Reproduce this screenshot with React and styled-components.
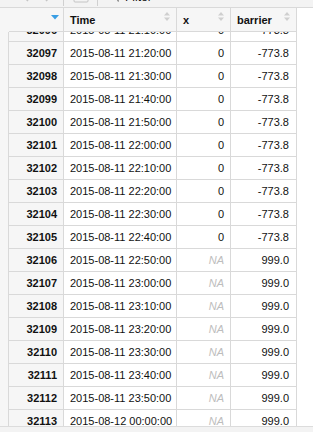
import React from 'react';
import styled, { createGlobalStyle } from 'styled-components';

const GlobalStyle = createGlobalStyle`
  html, body {
    margin: 0;
    padding: 0;
    background: #ffffff;
  }
  body {
    font-family: "Liberation Sans", Arial, sans-serif;
    color: #111;
  }
`;

const Page = styled.div`
  width: 313px;
  height: 432px;
  overflow: hidden;
  display: flex;
  flex-direction: column;
  background: #fff;
`;

/* toolbar is scrolled mostly out of view, only its bottom edge shows */
const Toolbar = styled.div`
  height: 7px;
  overflow: hidden;
  background: #f3f3f3;
  border-bottom: 1px solid #d9d9d9;
  flex-shrink: 0;
`;

const ToolbarInner = styled.div`
  height: 20px;
  margin-top: -13px;
  display: flex;
  align-items: center;
  padding-left: 22px;
  font-size: 12px;
  color: #111;
`;

const ToolDivider = styled.span`
  width: 1px;
  height: 18px;
  background: #d0d0d0;
  margin: 0 ${(p) => p.$right}px 0 ${(p) => p.$left}px;
`;

const ToolText = styled.span`
  margin-left: 2px;
`;

const Grid = styled.div`
  display: grid;
  grid-template-columns: 9px 55px 113px 54px 66px 1fr;
`;

const Header = styled(Grid)`
  height: 24px;
  flex-shrink: 0;
`;

const HeadCell = styled.div`
  box-sizing: border-box;
  position: relative;
  height: 24px;
  background: ${(p) => (p.$blank ? '#fff' : '#f6f6f6')};
  border-right: ${(p) => (p.$blank ? 'none' : '1px solid #d9d9d9')};
  border-bottom: ${(p) => (p.$blank ? 'none' : '1px solid #d9d9d9')};
  display: flex;
  align-items: center;
  padding: 0 6px;
  font-weight: bold;
  font-size: 11px;
  color: #111;
  white-space: nowrap;
`;

const SortIcon = styled.svg`
  position: absolute;
  top: 4px;
  right: 6px;
`;

const BodyWrap = styled.div`
  flex: 1;
  overflow: hidden;
`;

const Rows = styled.div`
  margin-top: -13px;
`;

const Row = styled(Grid)`
  height: 23px;
`;

const Cell = styled.div`
  box-sizing: border-box;
  height: 23px;
  border-right: 1px solid #d9d9d9;
  border-bottom: 1px solid #d9d9d9;
  display: flex;
  align-items: center;
  justify-content: ${(p) => (p.$right ? 'flex-end' : 'flex-start')};
  padding: 0 6px;
  font-size: 11px;
  color: #111;
  background: #fff;
  white-space: nowrap;
  overflow: hidden;
`;

const TimeCell = styled(Cell)`
  padding-right: 0;
`;

const NumCell = styled(Cell)`
  background: #f6f6f6;
  font-weight: bold;
  justify-content: flex-end;
`;

const Gutter = styled.div`
  background: #f6f6f6;
  border-right: 1px solid #d9d9d9;
`;

const Empty = styled.div`
  background: #fff;
`;

const NA = styled.span`
  font-style: italic;
  color: #bdbdbd;
`;

const BarrierCell = styled(Cell)`
  padding-right: 7px;
`;

const Scrollbar = styled.div`
  height: 5px;
  flex-shrink: 0;
  background: #f3f3f3;
  border-top: 1px solid #dcdcdc;
`;

const Sort = () => (
  <SortIcon width="6" height="9" viewBox="0 0 6 9">
    <path d="M3 0 L6 3.5 L0 3.5 Z" fill="#cfcfcf" />
    <path d="M3 9 L6 5.5 L0 5.5 Z" fill="#cfcfcf" />
  </SortIcon>
);

const SortDesc = () => (
  <SortIcon width="8" height="6" viewBox="0 0 8 6" style={{ top: 7, right: 4 }}>
    <path d="M0 0 L8 0 L4 4.5 Z" fill="#3a9ee4" />
  </SortIcon>
);

const pad = (n) => String(n).padStart(2, '0');

const rows = Array.from({ length: 18 }, (_, i) => {
  const id = 32096 + i;
  const mins = 21 * 60 + 10 + i * 10;
  const day = mins >= 24 * 60 ? 12 : 11;
  const m = mins % (24 * 60);
  const time = `2015-08-${day} ${pad(Math.floor(m / 60))}:${pad(m % 60)}:00`;
  const na = id > 32105;
  return { id, time, na, barrier: na ? '999.0' : '-773.8' };
});

export default function App() {
  return (
    <>
      <GlobalStyle />
      <Page>
        <Toolbar>
          <ToolbarInner>
            <svg width="30" height="14" viewBox="0 0 30 14">
              <path d="M6 3 L2 7 L6 11 M2 7 H11" stroke="#c4c4c4" strokeWidth="1.5" fill="none" />
              <path d="M24 3 L28 7 L24 11 M28 7 H19" stroke="#c4c4c4" strokeWidth="1.5" fill="none" />
            </svg>
            <ToolDivider $left={11} $right={9} />
            <svg width="16" height="14" viewBox="0 0 16 14">
              <rect x="1" y="2" width="14" height="10" rx="1" stroke="#c4c4c4" fill="none" />
            </svg>
            <ToolDivider $left={8} $right={15} />
            <svg width="10" height="12" viewBox="0 0 10 12">
              <path d="M0 1 H10 L6 6 V11 L4 10 V6 Z" fill="#9a9a9a" />
            </svg>
            <ToolText>Filter</ToolText>
          </ToolbarInner>
        </Toolbar>
        <Header>
          <HeadCell $blank as={Gutter} />
          <HeadCell>
            <SortDesc />
          </HeadCell>
          <HeadCell>
            Time
            <Sort />
          </HeadCell>
          <HeadCell>
            x
            <Sort />
          </HeadCell>
          <HeadCell>
            barrier
            <Sort />
          </HeadCell>
          <HeadCell $blank />
        </Header>
        <BodyWrap>
          <Rows>
            {rows.map((r) => (
              <Row key={r.id}>
                <Gutter />
                <NumCell>{r.id}</NumCell>
                <TimeCell>{r.time}</TimeCell>
                <Cell $right>{r.na ? <NA>NA</NA> : 0}</Cell>
                <BarrierCell $right>{r.barrier}</BarrierCell>
                <Empty />
              </Row>
            ))}
          </Rows>
        </BodyWrap>
        <Scrollbar />
      </Page>
    </>
  );
}
